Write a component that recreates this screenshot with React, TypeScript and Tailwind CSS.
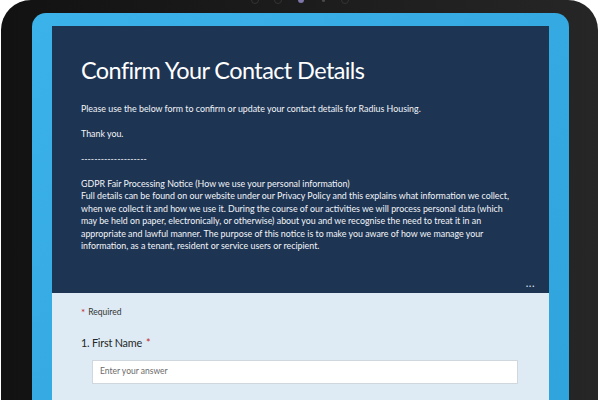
export default function App() {
  const font = { fontFamily: "Lato, 'Liberation Sans', sans-serif" };
  return (
    <div className="w-[600px] h-[400px] overflow-hidden bg-white" style={font}>
      <div className="relative ml-[1px] w-[597px] h-[460px] rounded-t-[30px] bg-gradient-to-r from-[#121212] via-[#1c1c1c] to-[#262626] pl-[31px] pr-[29px] pt-[13px]">
        {/* camera & sensors */}
        <div className="absolute left-[250px] top-[-4px] w-[8px] h-[8px] rounded-full border border-[#333]" />
        <div className="absolute left-[273px] top-[-4px] w-[8px] h-[8px] rounded-full border border-[#333]" />
        <div className="absolute left-[297px] top-[-3px] w-[6px] h-[6px] rounded-full bg-[#7d76a8]" />
        <div className="absolute left-[321px] top-[-1px] w-[3px] h-[3px] rounded-full bg-[#4a4a4a]" />
        <div className="absolute left-[340px] top-[-4px] w-[8px] h-[8px] rounded-full border border-[#333]" />

        <div className="h-full rounded-t-[14px] bg-gradient-to-br from-[#3cb2ea] via-[#34a9e2] to-[#2ea3dc] px-[20px] pt-[13px]">
          <div className="bg-[#1e3453] px-[29px] pt-[30px] pb-[4px] text-white">
            <h1 className="text-[23.5px] leading-[29px] tracking-[-0.6px]">Confirm Your Contact Details</h1>
            <div className="mt-[18px] text-[8.85px] leading-[12.5px] text-[#f2f5f9]">
              <p>Please use the below form to confirm or update your contact details for Radius Housing.</p>
              <p className="mt-[12.5px]">Thank you.</p>
              <p className="mt-[12.5px]">--------------------</p>
              <p className="mt-[12px]">
                GDPR Fair Processing Notice (How we use your personal information)
                <br />
                Full details can be found on our website under our Privacy Policy and this explains what information we collect,
                when we collect it and how we use it. During the course of our activities we will process personal data (which
                may be held on paper, electronically, or otherwise) about you and we recognise the need to treat it in an
                appropriate and lawful manner. The purpose of this notice is to make you aware of how we manage your
                information, as a tenant, resident or service users or recipient.
              </p>
            </div>
            <div className="mt-[24px] -mr-[15px] flex justify-end text-[11px] leading-[12px] tracking-[0.5px] text-[#dfe6ee]">...</div>
          </div>
          <div className="h-[200px] bg-[#deebf4] px-[29px] pt-[13px]">
            <div className="flex items-start gap-[3px] text-[8.5px] leading-[12px] text-[#333]">
              <span className="text-[#c4262e] text-[10px]">*</span>
              <span>Required</span>
            </div>
            <div className="mt-[17px] flex items-center text-[10.8px] leading-[16px] tracking-[-0.2px] text-[#262626]">
              <span>1. First Name</span>
              <span className="ml-[4px] text-[#c4262e]">*</span>
            </div>
            <div className="mt-[9px] ml-[11px] w-[426px] h-[24px] bg-white border border-[#d0d7de] px-[7px] flex items-center text-[8.5px] text-[#6b6b6b]">
              Enter your answer
            </div>
          </div>
        </div>
      </div>
    </div>
  );
}
